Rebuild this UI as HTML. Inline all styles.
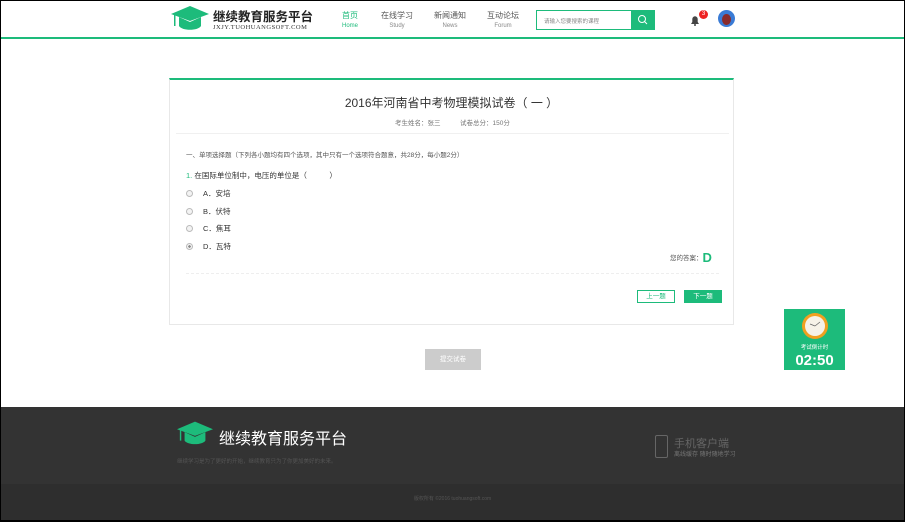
<!DOCTYPE html>
<html><head><meta charset="utf-8"><style>
*{margin:0;padding:0;box-sizing:border-box}
body{width:905px;height:522px;overflow:hidden;background:#000;font-family:"Liberation Sans","Noto Sans CJK SC",sans-serif;color:#333}
#w{position:absolute;left:1px;top:1px;width:903px;height:519px;background:#fff;overflow:hidden}
.hdr{position:absolute;left:0;top:0;width:903px;height:38px;background:#fff;border-bottom:2px solid #1dbb7b}
.abs{position:absolute}
.nav{position:absolute;top:9px;text-align:center;font-size:8px;color:#555;line-height:12px}
.nav small{display:block;font-size:6px;color:#888;line-height:9px}
.card{position:absolute;left:168px;top:77px;width:565px;height:247px;border:1px solid #e8e8e8;border-top:2px solid #1dbb7b;background:#fff}
.opt{position:absolute;left:16px;font-size:7.5px;color:#333}
.opt i{display:inline-block;width:7px;height:7px;border:1px solid #bbb;border-radius:50%;vertical-align:-1px;margin-right:10px;background:#f3f3f3}
.foot{position:absolute;left:0;top:406px;width:903px;height:77px;background:#333}
.foot2{position:absolute;left:0;top:483px;width:903px;height:36px;background:#2e2e2e}
</style></head><body><div id="w">
<div class="hdr">
 <svg class="abs" style="left:170px;top:5px" width="38" height="26" viewBox="0 0 38 26"><polygon points="0,8 19,0 38,8 19,15" fill="#1dbb7b"/><path d="M8,11 v9 c3,5 19,5 22,0 v-9 l-11,5z" fill="#1dbb7b"/><rect x="3" y="9" width="1.5" height="11" fill="#1dbb7b"/></svg>
 <div class="abs" style="left:212px;top:5px;font-size:12.5px;font-weight:bold;color:#222">继续教育服务平台</div>
 <div class="abs" style="left:212px;top:23px;font-size:6.5px;color:#333;font-family:'Liberation Serif',serif;letter-spacing:.5px">JXJY.TUOHUANGSOFT.COM</div>
 <div class="nav" style="left:341px;color:#1dbb7b">首页<small style="color:#1dbb7b">Home</small></div>
 <div class="nav" style="left:380px">在线学习<small>Study</small></div>
 <div class="nav" style="left:433px">新闻通知<small>News</small></div>
 <div class="nav" style="left:486px">互动论坛<small>Forum</small></div>
 <div class="abs" style="left:535px;top:9px;width:96px;height:20px;border:1px solid #1dbb7b;font-size:5.5px;color:#888;padding:6px 7px">请输入您要搜索的课程</div>
 <div class="abs" style="left:630px;top:9px;width:24px;height:20px;background:#1dbb7b"><svg width="24" height="20"><circle cx="11" cy="9" r="3.5" stroke="#fff" fill="none"/><line x1="13.5" y1="11.5" x2="16" y2="14" stroke="#fff"/></svg></div>
 <svg class="abs" style="left:689px;top:14px" width="10" height="11"><path d="M1,9 h8 l-1.3,-2 v-3 a2.7,2.7 0 0 0 -5.4,0 v3z" fill="#444"/><circle cx="5" cy="10" r="1" fill="#444"/></svg>
 <div class="abs" style="left:698px;top:9px;width:9px;height:9px;border-radius:50%;background:#e22;color:#fff;font-size:6px;text-align:center;line-height:9px">3</div>
 <div class="abs" style="left:717px;top:9px;width:17px;height:17px;border-radius:50%;background:#3a7bd5;overflow:hidden"><div style="margin:4px auto 0;width:9px;height:11px;border-radius:50%;background:#8a2b2b"></div></div>
</div>
<div class="card">
 <div class="abs" style="left:0;width:563px;top:14px;text-align:center;font-size:12px;color:#333">2016年河南省中考物理模拟试卷（ 一 ）</div>
 <div class="abs" style="left:225px;top:37px;font-size:6.5px;color:#777">考生姓名：张三　　　试卷总分：150分</div>
 <div class="abs" style="left:6px;top:53px;width:553px;border-top:1px solid #f0f0f0"></div>
 <div class="abs" style="left:16px;top:69px;font-size:6.5px;color:#555">一、单项选择题（下列各小题均有四个选项，其中只有一个选项符合题意，共28分，每小题2分）</div>
 <div class="abs" style="left:16px;top:90px;font-size:7.5px;color:#333"><span style="color:#1dbb7b">1.</span> 在国际单位制中，电压的单位是（　　　）</div>
 <div class="opt" style="top:108px"><i></i>A．安培</div>
 <div class="opt" style="top:126px"><i></i>B．伏特</div>
 <div class="opt" style="top:143px"><i></i>C．焦耳</div>
 <div class="opt" style="top:161px"><i style="background:radial-gradient(#888 35%,#f3f3f3 40%)"></i>D．瓦特</div>
 <div class="abs" style="left:500px;top:170px;font-size:6.5px;color:#555">您的答案：<b style="color:#1dbb7b;font-size:13px;vertical-align:-2px">D</b></div>
 <div class="abs" style="left:16px;top:193px;width:533px;border-top:1px dashed #eee"></div>
 <div class="abs" style="left:467px;top:210px;width:38px;height:13px;border:1px solid #1dbb7b;font-size:6.5px;color:#1dbb7b;text-align:center;line-height:11px">上一题</div>
 <div class="abs" style="left:514px;top:210px;width:38px;height:13px;background:#1dbb7b;font-size:6.5px;color:#fff;text-align:center;line-height:13px">下一题</div>
</div>
<div class="abs" style="left:424px;top:348px;width:56px;height:21px;background:#ccc;color:#fff;font-size:6.5px;text-align:center;line-height:21px">提交试卷</div>
<div class="abs" style="left:783px;top:308px;width:61px;height:61px;background:#1dbb7b;text-align:center;color:#fff">
 <svg style="margin-top:3px" width="28" height="28"><circle cx="14" cy="14" r="13" fill="#f0a020"/><circle cx="14" cy="14" r="10" fill="#f6f2e8"/><path d="M14,14 l-5,-2 M14,14 l5,-4" stroke="#666" stroke-width=".8"/></svg>
 <div style="font-size:5.5px;line-height:7px">考试倒计时</div>
 <div style="font-size:15px;font-weight:bold;line-height:17px">02:50</div>
</div>
<div class="foot">
 <svg class="abs" style="left:176px;top:13px" width="36" height="28" viewBox="0 0 38 26"><polygon points="0,8 19,0 38,8 19,15" fill="#1dbb7b"/><path d="M8,11 v9 c3,5 19,5 22,0 v-9 l-11,5z" fill="#1dbb7b"/><rect x="3" y="9" width="1.5" height="11" fill="#1dbb7b"/></svg>
 <div class="abs" style="left:218px;top:18px;font-size:16px;color:#fff">继续教育服务平台</div>
 <div class="abs" style="left:176px;top:50px;font-size:5.5px;color:#555">继续学习是为了更好的开始，继续教育只为了你更加美好的未来。</div>
 <div class="abs" style="left:654px;top:28px;width:13px;height:23px;border:1px solid #666;border-radius:2px"></div>
 <div class="abs" style="left:673px;top:28px;font-size:11px;color:#666">手机客户端</div>
 <div class="abs" style="left:673px;top:42px;font-size:6px;color:#777">离线缓存 随时随地学习</div>
</div>
<div class="foot2"><div style="text-align:center;font-size:5px;color:#555;margin-top:11px">版权所有 ©2016 tuohuangsoft.com</div></div>
</div></body></html>
